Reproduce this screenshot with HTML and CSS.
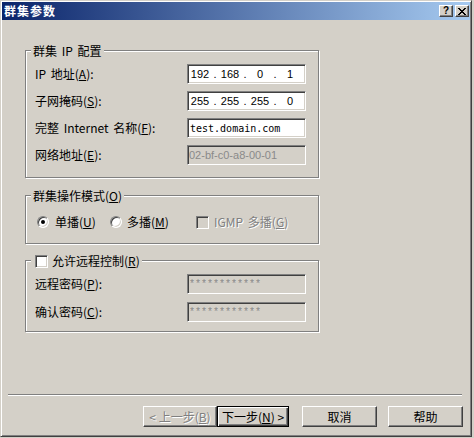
FILE: index.html
```html
<!DOCTYPE html>
<html lang="zh-CN">
<head>
    <meta charset="UTF-8">
    <title>群集参数</title>
    <link rel="stylesheet" href="styles.css">
</head>
<body>
    <div class="dialog">
        <div class="titlebar">
            <span class="title">群集参数</span>
            <div class="caption-buttons">
                <button class="cap cap-help">?</button>
                <button class="cap">
                    <svg width="8" height="7" viewBox="0 0 8 7" shape-rendering="crispEdges">
                        <path d="M0 0h2v1H0zM6 0h2v1H6zM1 1h2v1H1zM5 1h2v1H5zM2 2h4v1H2zM3 3h2v1H3zM2 4h4v1H2zM1 5h2v1H1zM5 5h2v1H5zM0 6h2v1H0zM6 6h2v1H6z" fill="#000"/>
                    </svg>
                </button>
            </div>
        </div>

        <div class="content">
            <div class="group group-ip">
                <div class="group-title"><span>群集 IP 配置</span></div>
                <div class="rows">
                    <div class="row">
                        <span class="label">IP 地址(<u>A</u>):</span>
                        <div class="edit ip">
                            <span class="octet">192</span><span class="dot">.</span>
                            <span class="octet">168</span><span class="dot">.</span>
                            <span class="octet">0</span><span class="dot">.</span>
                            <span class="octet">1</span>
                        </div>
                    </div>
                    <div class="row">
                        <span class="label">子网掩码(<u>S</u>):</span>
                        <div class="edit ip">
                            <span class="octet">255</span><span class="dot">.</span>
                            <span class="octet">255</span><span class="dot">.</span>
                            <span class="octet">255</span><span class="dot">.</span>
                            <span class="octet">0</span>
                        </div>
                    </div>
                    <div class="row">
                        <span class="label">完整 Internet 名称(<u>F</u>):</span>
                        <div class="edit mono">test.domain.com</div>
                    </div>
                    <div class="row">
                        <span class="label">网络地址(<u>E</u>):</span>
                        <div class="edit disabled">02-bf-c0-a8-00-01</div>
                    </div>
                </div>
            </div>

            <div class="group group-mode">
                <div class="group-title"><span>群集操作模式(<u>O</u>)</span></div>
                <div class="options">
                    <span class="option opt-unicast"><span class="radio checked"><span class="radio-dot"></span></span><span>单播(<u>U</u>)</span></span>
                    <span class="option opt-multicast"><span class="radio"></span><span>多播(<u>M</u>)</span></span>
                    <span class="option option-disabled"><span class="check disabled"></span><span>IGMP 多播(<u>G</u>)</span></span>
                </div>
            </div>

            <div class="group group-remote">
                <div class="group-title"><span class="check legend-check"></span><span>允许远程控制(<u>R</u>)</span></div>
                <div class="rows">
                    <div class="row">
                        <span class="label">远程密码(<u>P</u>):</span>
                        <div class="edit disabled mask">************</div>
                    </div>
                    <div class="row">
                        <span class="label">确认密码(<u>C</u>):</span>
                        <div class="edit disabled mask">************</div>
                    </div>
                </div>
            </div>
        </div>

        <div class="footer">
            <div class="separator"></div>
            <div class="buttons">
                <button class="btn btn-back" disabled>&lt; 上一步(<u>B</u>)</button>
                <button class="btn btn-next default">下一步(<u>N</u>) &gt;</button>
                <button class="btn btn-cancel">取消</button>
                <button class="btn btn-help">帮助</button>
            </div>
        </div>
    </div>
</body>
</html>
```

FILE: styles.css
```css
* {
    box-sizing: border-box;
}

body {
    margin: 0;
    background: #d4d0c8;
    font-family: "Noto Sans CJK SC", "Liberation Sans", sans-serif;
    font-size: 12px;
    color: #000;
}

u {
    text-decoration: underline;
    text-underline-offset: 1px;
}

/* Window frame */
.dialog {
    width: 472px;
    height: 437px;
    display: flex;
    flex-direction: column;
    padding: 1px;
    background: #d4d0c8;
    border: 1px solid;
    border-color: #d4d0c8 #404040 #404040 #d4d0c8;
    box-shadow: inset 1px 1px #fff, inset -1px -1px #808080;
}

.titlebar {
    height: 18px;
    display: flex;
    align-items: center;
    justify-content: space-between;
    padding: 0 1px 0 2px;
    background: linear-gradient(to right, #0a246a, #a6caf0);
}

.title {
    color: #fff;
    font-weight: bold;
    letter-spacing: 1px;
    line-height: 14px;
}

.caption-buttons {
    display: flex;
    gap: 2px;
}

.cap {
    width: 14px;
    height: 12px;
    padding: 0;
    display: flex;
    align-items: center;
    justify-content: center;
    background: #d4d0c8;
    border: 1px solid;
    border-color: #fff #404040 #404040 #fff;
    box-shadow: inset -1px -1px #808080;
}

.cap-help {
    font: bold 10px "Liberation Sans", sans-serif;
    line-height: 10px;
}

/* Group boxes */
.content {
    padding: 30px 0 0 23px;
}

.group {
    width: 294px;
    display: flex;
    flex-direction: column;
    align-items: flex-start;
    padding: 0 12px 12px 9px;
    border: 1px solid #808080;
    box-shadow: 1px 1px 0 #fff, inset 1px 1px 0 #fff;
}

.group-title {
    display: flex;
    align-items: center;
    margin: -8px 0 0 -4px;
    padding: 0 2px;
    line-height: 16px;
    height: 16px;
    background: #d4d0c8;
    word-spacing: 2px;
}

.rows {
    align-self: stretch;
    display: flex;
    flex-direction: column;
    gap: 7px;
    margin-top: 5px;
}

.row {
    height: 20px;
    display: flex;
    align-items: center;
    justify-content: space-between;
}

.label {
    line-height: 14px;
    word-spacing: 2px;
}

.group-mode {
    margin-top: 17px;
    padding-bottom: 14px;
}

.group-remote {
    margin-top: 16px;
    padding-bottom: 9px;
}

.group-remote .rows {
    gap: 8px;
}

/* Edit controls */
.edit {
    width: 119px;
    height: 20px;
    display: flex;
    align-items: center;
    padding-left: 2px;
    background: #fff;
    border: 1px solid;
    border-color: #808080 #fff #fff #808080;
    box-shadow: inset 1px 1px #404040, inset -1px -1px #d4d0c8;
    white-space: nowrap;
    overflow: hidden;
}

.edit.ip {
    padding-left: 0;
    font: 11px "Liberation Sans", sans-serif;
}

.octet {
    width: 24px;
    text-align: center;
}

.dot {
    width: 6px;
    text-align: center;
}

.edit.mono {
    font: 10px "DejaVu Sans Mono", monospace;
}

.edit.disabled {
    padding-left: 1px;
    background: #d4d0c8;
    color: #8a8a8a;
    font: 11px "Liberation Sans", sans-serif;
}

.edit.mask {
    font: 10px "Liberation Mono", monospace;
    color: #8a8a8a;
}

/* Radio buttons and check boxes */
.options {
    display: flex;
    align-items: center;
    height: 14px;
    margin-top: 11px;
    padding-left: 2px;
}

.option {
    display: flex;
    align-items: center;
    line-height: 14px;
}

.opt-unicast {
    width: 73px;
    gap: 6px;
}

.opt-multicast {
    width: 86px;
    gap: 5px;
}

.option-disabled {
    gap: 5px;
    color: #808080;
    text-shadow: 1px 1px 0 #fff;
    word-spacing: 2px;
}

.radio {
    width: 12px;
    height: 12px;
    display: flex;
    align-items: center;
    justify-content: center;
    border-radius: 50%;
    background: #fff;
    border: 1px solid;
    border-color: #808080 #fff #fff #808080;
    box-shadow: inset 1px 1px #404040, inset -1px -1px #d4d0c8;
}

.radio-dot {
    width: 4px;
    height: 4px;
    border-radius: 50%;
    background: #000;
}

.check {
    width: 13px;
    height: 13px;
    background: #fff;
    border: 1px solid;
    border-color: #808080 #fff #fff #808080;
    box-shadow: inset 1px 1px #404040, inset -1px -1px #d4d0c8;
}

.check.disabled {
    background: #d4d0c8;
}

.legend-check {
    margin: 0 4px 0 2px;
}

/* Bottom button bar */
.footer {
    margin-top: auto;
}

.separator {
    height: 2px;
    margin: 0 8px 10px 6px;
    border-top: 1px solid #808080;
    border-bottom: 1px solid #fff;
}

.buttons {
    display: flex;
    justify-content: flex-end;
    padding: 0 7px 8px 0;
}

.btn {
    width: 75px;
    height: 21px;
    padding: 0;
    font: inherit;
    line-height: 14px;
    color: #000;
    background: #d4d0c8;
    border: 1px solid;
    border-color: #fff #404040 #404040 #fff;
    box-shadow: inset -1px -1px #808080;
}

.btn:disabled {
    color: #808080;
    text-shadow: 1px 1px 0 #fff;
}

.btn-back {
    width: 74px;
}

.btn-next {
    width: 72px;
}

.btn.default {
    border-color: #000;
    box-shadow: inset 1px 1px #fff, inset -1px -1px #404040, inset -2px -2px #808080;
}

.btn-cancel {
    margin-left: 13px;
}

.btn-help {
    margin-left: 11px;
}
```
